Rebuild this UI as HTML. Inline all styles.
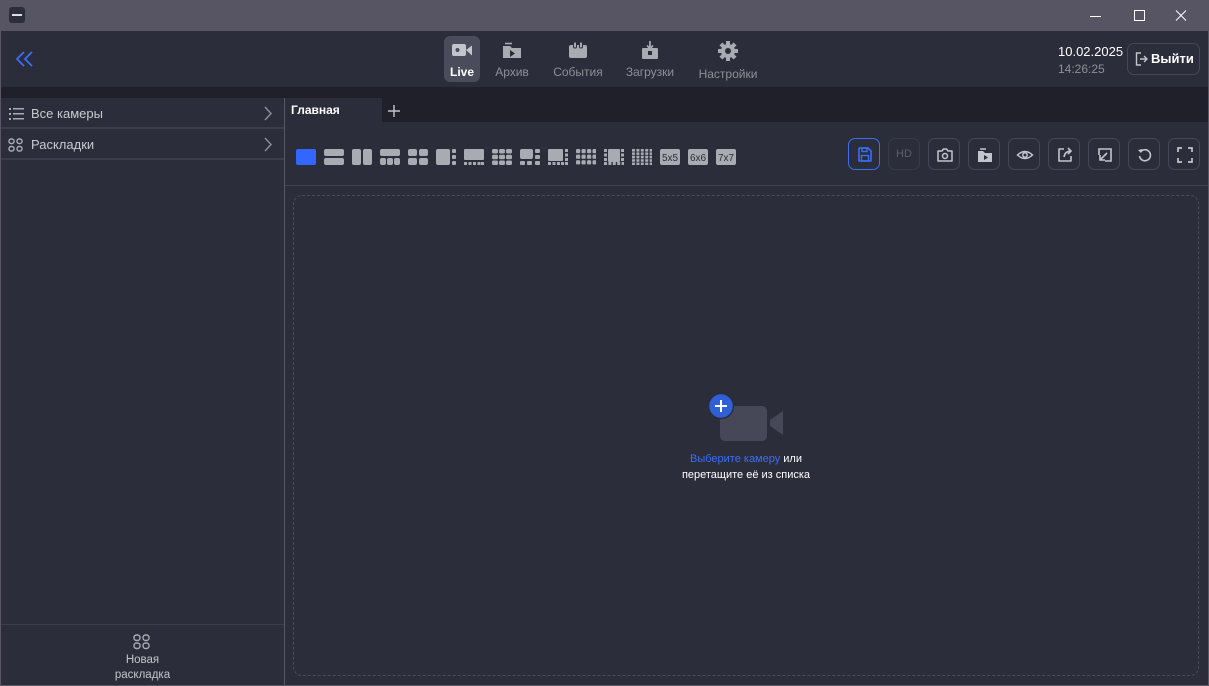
<!DOCTYPE html>
<html><head><meta charset="utf-8"><style>
*{box-sizing:border-box;margin:0;padding:0}
body{width:1209px;height:686px;overflow:hidden;background:#5a5866;font-family:"Liberation Sans","DejaVu Sans",sans-serif;position:relative}
.abs{position:absolute}
.title{left:0;top:0;width:1209px;height:31px;background:#575563}
.hdr{left:1px;top:31px;width:1207px;height:56px;background:#2b2d3a}
.strip{left:1px;top:87px;width:1207px;height:11px;background:#1f2029}
.side{left:1px;top:98px;width:283px;height:587px;background:#2b2d3a}
.row{position:absolute;left:0;width:283px;height:31px;border-bottom:2px solid #3b3d4b;color:#c8cad0;font-size:13px;line-height:32px;padding-left:30px}
.main{left:285px;top:98px;width:923px;height:587px;background:#2b2d3a}
.tabbar{left:285px;top:98px;width:923px;height:24px;background:#1f2029}
.tab{left:285px;top:98px;width:97px;height:24px;background:#2b2d3a;color:#fff;font-size:12px;font-weight:bold;line-height:24px;padding-left:6px}
.nav{top:37px;width:36px;height:44px;text-align:center;color:#8d8f99;font-size:12px;line-height:14px}
.nav svg{display:block;margin:4px auto 6px}
.btn{top:138px;width:32px;height:32px;border:1px solid #454756;border-radius:7px}
.btn svg{position:absolute;left:7px;top:7px}
.li{top:149px}
</style></head><body>
<div class="abs title"></div>
<div class="abs" style="left:9px;top:7px;width:16px;height:16px;background:#2b2d3a;border-radius:3px"><div style="position:absolute;left:3px;top:7px;width:10px;height:2px;background:#ddd"></div></div>
<svg class="abs" style="left:1090px;top:10px" width="100" height="12"><path d="M0 6.5H11" stroke="#fff" stroke-width="1"/><rect x="44.5" y="0.5" width="10" height="10" fill="none" stroke="#fff"/><path d="M86 0.5l10 10M96 0.5l-10 10" stroke="#fff"/></svg>
<div class="abs hdr"></div>
<svg class="abs" style="left:15px;top:51px" width="20" height="16"><path d="M9 1L2 8l7 7M17 1l-7 7 7 7" fill="none" stroke="#3b6ef5" stroke-width="1.8"/></svg>

<div class="abs" style="left:444px;top:36px;width:36px;height:46px;background:#4a4c5b;border-radius:6px"></div>
<div class="abs nav" style="left:444px;color:#fff;font-weight:bold"><svg width="22" height="18"><rect x="1" y="3" width="14" height="12" rx="2" fill="#c3c5cc"/><path d="M15 9l6-4.5v10z" fill="#c3c5cc"/><circle cx="6.5" cy="9" r="2" fill="#4a4c5b"/></svg>Live</div>
<div class="abs nav" style="left:494px"><svg width="22" height="18"><path d="M2 5h7l2 2h9v10H2z" fill="#a9abb3"/><path d="M4 2.5h7" stroke="#a9abb3" stroke-width="1.6"/><path d="M9 9l5 3.5-5 3.5z" fill="#2b2d3a"/></svg>Архив</div>
<div class="abs nav" style="left:553px;width:50px"><svg width="22" height="18"><rect x="2" y="4" width="18" height="13" rx="2" fill="#a9abb3"/><rect x="6.5" y="1" width="3" height="6" rx="1.2" fill="#a9abb3" stroke="#2b2d3a"/><rect x="12.5" y="1" width="3" height="6" rx="1.2" fill="#a9abb3" stroke="#2b2d3a"/></svg>События</div>
<div class="abs nav" style="left:622px;width:56px"><svg width="22" height="18"><rect x="3" y="7" width="16" height="11" rx="1" fill="#a9abb3"/><path d="M11 0v7M8 4.5l3 3 3-3" stroke="#a9abb3" stroke-width="1.7" fill="none"/><rect x="9" y="10" width="4" height="4" fill="#2b2d3a"/></svg>Загрузки</div>
<div class="abs nav" style="left:697px;width:62px"><svg width="22" height="20" viewBox="0 0 20 20"><g fill="#a9abb3" transform="translate(10 10)"><circle r="7"/><rect x="-2" y="-10" width="4" height="20"/><rect x="-2" y="-10" width="4" height="20" transform="rotate(45)"/><rect x="-2" y="-10" width="4" height="20" transform="rotate(90)"/><rect x="-2" y="-10" width="4" height="20" transform="rotate(135)"/></g><circle cx="10" cy="10" r="3" fill="#2b2d3a"/></svg>Настройки</div>

<div class="abs" style="left:1058px;top:44px;color:#fff;font-size:13px">10.02.2025</div>
<div class="abs" style="left:1058px;top:62px;color:#8d8f99;font-size:12px">14:26:25</div>
<div class="abs" style="left:1127px;top:43px;width:73px;height:32px;border:1px solid #454756;border-radius:7px;color:#fff;font-size:13px;font-weight:bold;line-height:30px;padding-left:23px">Выйти</div>
<svg class="abs" style="left:1135px;top:52px" width="14" height="14"><path d="M6 1H1.5v12H6M5 7h7M9 4l3 3-3 3" fill="none" stroke="#c3c5cc" stroke-width="1.4"/></svg>

<div class="abs strip"></div>
<div class="abs side">
<div class="row" style="top:0">Все камеры</div>
<div class="row" style="top:31px">Раскладки</div>
<div style="position:absolute;left:0;top:526px;width:283px;border-top:1px solid #3b3d4b;height:61px;text-align:center;color:#c3c5cc;font-size:11.5px;line-height:15px;padding-top:28px">Новая<br>раскладка</div>
</div>
<svg class="abs" style="left:9px;top:107px" width="16" height="14"><g fill="#a9abb3"><rect x="0" y="1" width="2" height="2"/><rect x="0" y="6" width="2" height="2"/><rect x="0" y="11" width="2" height="2"/><rect x="4" y="1" width="11" height="1.5"/><rect x="4" y="6" width="11" height="1.5"/><rect x="4" y="11" width="11" height="1.5"/></g></svg>
<svg class="abs" style="left:8px;top:138px" width="16" height="14"><g fill="none" stroke="#a9abb3" stroke-width="1.4"><rect x="1" y="1" width="5" height="4.5" rx="2"/><rect x="9" y="1" width="5" height="4.5" rx="2"/><rect x="1" y="8.5" width="5" height="4.5" rx="2"/><rect x="9" y="8.5" width="5" height="4.5" rx="2"/></g></svg>
<svg class="abs" style="left:263px;top:106px" width="10" height="48"><path d="M2 1l6 6.5-6 6.5M2 32l6 6.5-6 6.5" fill="none" stroke="#8d8f99" stroke-width="1.4"/></svg>
<svg class="abs" style="left:133px;top:634px" width="18" height="16"><g fill="none" stroke="#a9abb3" stroke-width="1.4"><rect x="1" y="1" width="6" height="5.5" rx="2.5"/><rect x="10" y="1" width="6" height="5.5" rx="2.5"/><rect x="1" y="9" width="6" height="5.5" rx="2.5"/><rect x="10" y="9" width="6" height="5.5" rx="2.5"/></g></svg>

<div class="abs main"></div>
<div class="abs tabbar"></div>
<div class="abs tab">Главная</div>
<svg class="abs" style="left:388px;top:105px" width="12" height="12"><path d="M6 0v12M0 6h12" stroke="#c3c5cc" stroke-width="1.4"/></svg>
<div class="abs" style="left:285px;top:185px;width:923px;height:1px;background:#3e4050"></div>

<svg class="abs li" style="left:296px" width="460" height="16"><g fill="#a9abb3">
<rect x="0" y="0" width="20" height="16" rx="2" fill="#3366ff"/>
<rect x="28" y="0" width="20" height="7" rx="2"/><rect x="28" y="9" width="20" height="7" rx="2"/>
<rect x="56" y="0" width="9" height="16" rx="2"/><rect x="67" y="0" width="9" height="16" rx="2"/>
<rect x="84" y="0" width="20" height="7" rx="2"/><rect x="84" y="9" width="6" height="7" rx="2"/><rect x="91" y="9" width="6" height="7" rx="2"/><rect x="98" y="9" width="6" height="7" rx="2"/>
<rect x="112" y="0" width="9" height="7" rx="2"/><rect x="123" y="0" width="9" height="7" rx="2"/><rect x="112" y="9" width="9" height="7" rx="2"/><rect x="123" y="9" width="9" height="7" rx="2"/>
<rect x="140" y="0" width="14" height="16" rx="2"/><rect x="156" y="0" width="4" height="4" rx="1"/><rect x="156" y="6" width="4" height="4" rx="1"/><rect x="156" y="12" width="4" height="4" rx="1"/>
<rect x="168" y="0" width="20" height="11" rx="1"/><rect x="168" y="13" width="3" height="3"/><rect x="172.5" y="13" width="3" height="3"/><rect x="177" y="13" width="3" height="3"/><rect x="181.5" y="13" width="3" height="3"/><rect x="185" y="13" width="3" height="3"/>
<rect x="196" y="0" width="6" height="4.5" rx="1.5"/><rect x="203" y="0" width="6" height="4.5" rx="1.5"/><rect x="210" y="0" width="6" height="4.5" rx="1.5"/><rect x="196" y="5.7" width="6" height="4.5" rx="1.5"/><rect x="203" y="5.7" width="6" height="4.5" rx="1.5"/><rect x="210" y="5.7" width="6" height="4.5" rx="1.5"/><rect x="196" y="11.5" width="6" height="4.5" rx="1.5"/><rect x="203" y="11.5" width="6" height="4.5" rx="1.5"/><rect x="210" y="11.5" width="6" height="4.5" rx="1.5"/>
<rect x="224" y="0" width="13" height="10" rx="2"/><rect x="239" y="0" width="5" height="4" rx="1"/><rect x="239" y="6" width="5" height="4" rx="1"/><rect x="224" y="12" width="5" height="4" rx="1"/><rect x="231" y="12" width="5" height="4" rx="1"/><rect x="239" y="12" width="5" height="4" rx="1"/>
<rect x="252" y="0" width="15" height="12" rx="1"/><rect x="269" y="0" width="3" height="3"/><rect x="269" y="4.5" width="3" height="3"/><rect x="269" y="9" width="3" height="3"/><rect x="252" y="13" width="3" height="3"/><rect x="256.5" y="13" width="3" height="3"/><rect x="261" y="13" width="3" height="3"/><rect x="265" y="13" width="3" height="3"/><rect x="269" y="13" width="3" height="3"/>
<rect x="280" y="0" width="20" height="16" fill="url(#g4)"/>
<rect x="312" y="0" width="12" height="13" rx="1"/><rect x="308" y="0" width="3" height="3"/><rect x="308" y="4.5" width="3" height="3"/><rect x="308" y="9" width="3" height="3"/><rect x="325" y="0" width="3" height="3"/><rect x="325" y="4.5" width="3" height="3"/><rect x="325" y="9" width="3" height="3"/><rect x="308" y="13" width="20" height="3" fill="url(#g5)"/>
<rect x="336" y="0" width="20" height="16" fill="url(#g5b)"/>
<rect x="364" y="0" width="20" height="16" rx="2"/><rect x="392" y="0" width="20" height="16" rx="2"/><rect x="420" y="0" width="20" height="16" rx="2"/>
</g>
<defs><pattern id="g4" width="5.5" height="5.6" patternUnits="userSpaceOnUse" x="280"><rect width="4.2" height="4.2" rx="1.2" fill="#a9abb3"/></pattern>
<pattern id="g5" width="4.4" height="4" patternUnits="userSpaceOnUse" x="308" y="13"><rect width="3" height="3" fill="#a9abb3"/></pattern>
<pattern id="g5b" width="4.4" height="3.4" patternUnits="userSpaceOnUse" x="336"><rect width="3" height="2.6" fill="#a9abb3"/></pattern></defs>
<g font-size="10" fill="#2b2d3a" text-anchor="middle" font-family="Liberation Sans"><text x="374" y="12">5x5</text><text x="402" y="12">6x6</text><text x="430" y="12">7x7</text></g>
</svg>

<div class="abs btn" style="left:848px;border-color:#3b6ef5"><svg width="18" height="18"><path d="M3 2h9l3 3v10H3z" fill="none" stroke="#3b6ef5" stroke-width="1.6" stroke-linejoin="round"/><rect x="6" y="2" width="5" height="3.5" fill="none" stroke="#3b6ef5" stroke-width="1.4"/><rect x="5.5" y="9.5" width="7" height="5.5" fill="none" stroke="#3b6ef5" stroke-width="1.4"/></svg></div>
<div class="abs btn" style="left:888px;border-color:#383a48;color:#5c5e6a;font-size:11px;line-height:30px;text-align:center">HD</div>
<div class="abs btn" style="left:928px"><svg width="18" height="18"><path d="M2 5h4l1.5-2h3L12 5h4v10H2z" fill="none" stroke="#c3c5cc" stroke-width="1.5" stroke-linejoin="round"/><circle cx="9" cy="10" r="2.5" fill="none" stroke="#c3c5cc" stroke-width="1.5"/></svg></div>
<div class="abs btn" style="left:968px"><svg width="18" height="18"><path d="M2 5h5l2 2h7v9H2z" fill="#c3c5cc"/><path d="M4 3h6" stroke="#c3c5cc" stroke-width="1.5"/><path d="M8 9l4 2.5-4 2.5z" fill="#2b2d3a"/></svg></div>
<div class="abs btn" style="left:1008px"><svg width="18" height="18"><path d="M1.5 9Q9 2 16.5 9Q9 16 1.5 9z" fill="none" stroke="#c3c5cc" stroke-width="1.5"/><circle cx="9" cy="9" r="2.2" fill="none" stroke="#c3c5cc" stroke-width="1.5"/></svg></div>
<div class="abs btn" style="left:1048px"><svg width="18" height="18"><path d="M8 3H3v12h12v-5" fill="none" stroke="#c3c5cc" stroke-width="1.6" stroke-linejoin="round"/><path d="M8 11q1-6 7-6M12 2l3 3-3 3" fill="none" stroke="#c3c5cc" stroke-width="1.6"/></svg></div>
<div class="abs btn" style="left:1088px"><svg width="18" height="18"><path d="M3 9V3h12v12H9" fill="none" stroke="#c3c5cc" stroke-width="1.6"/><path d="M11 7l-7 7M4 9v5h5" fill="none" stroke="#c3c5cc" stroke-width="1.6"/></svg></div>
<div class="abs btn" style="left:1128px"><svg width="18" height="18"><path d="M4.5 6A5.5 5.5 0 1 1 3.5 10" fill="none" stroke="#c3c5cc" stroke-width="1.6"/><path d="M2 4l3 3 1-4z" fill="#c3c5cc"/></svg></div>
<div class="abs btn" style="left:1168px"><svg width="18" height="18"><path d="M2 6V2h4M12 2h4v4M16 12v4h-4M6 16H2v-4" fill="none" stroke="#c3c5cc" stroke-width="1.7"/></svg></div>

<div class="abs" style="left:293px;top:195px;width:906px;height:481px;border:1px dashed #4a4c5a;border-radius:9px"></div>

<svg class="abs" style="left:708px;top:393px" width="80" height="50"><rect x="12" y="13" width="47" height="35" rx="5" fill="#464857"/><path d="M62 27l13-9v24l-13-9z" fill="#464857"/><circle cx="13" cy="13" r="12.5" fill="#3060d8" stroke="#2b2d3a" stroke-width="1.5"/><path d="M13 7v12M7 13h12" stroke="#fff" stroke-width="2"/></svg>
<div class="abs" style="left:646px;top:451px;width:200px;text-align:center;color:#fff;font-size:11px;line-height:16px">
<span style="color:#3b6ef5">Выберите камеру</span> или<br>перетащите её из списка</div>
</body></html>
